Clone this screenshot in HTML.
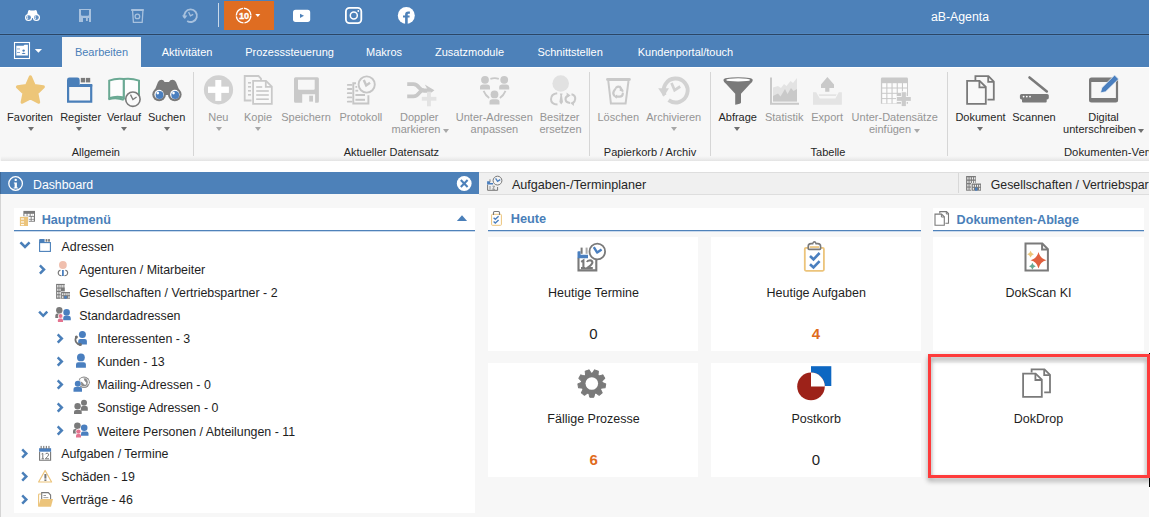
<!DOCTYPE html>
<html><head><meta charset="utf-8"><style>
html,body{margin:0;padding:0;}
body{width:1150px;height:517px;position:relative;overflow:hidden;background:#fff;font-family:"Liberation Sans",sans-serif;}
.t{position:absolute;white-space:nowrap;line-height:20px;}
.r{position:absolute;}
svg.r{overflow:visible}
</style></head><body>
<div class="r" style="left:0px;top:0px;width:1149px;height:33px;background:#4d81b9;"></div>
<div class="r" style="left:0px;top:34px;width:1149px;height:33px;background:#4d81b9;"></div>
<div class="r" style="left:0px;top:33px;width:1149px;height:1px;background:#5287bf;"></div>
<div class="r" style="left:0px;top:35px;width:1149px;height:1px;background:#5287bf;"></div>
<div class="r" style="left:0px;top:34px;width:1149px;height:1px;background:#2b4666;"></div>
<svg class="r" style="left:0;top:0" width="450" height="67" viewBox="0 0 450 67">
<!-- binoculars -->
<path d="M27 15.5 L28.3 10.6 Q29.5 9.2 30.6 10.6 L34.3 10.6 Q35.4 9.2 36.6 10.6 L38 15.5 Z" fill="#fff"/>
<circle cx="28.6" cy="17.5" r="3.6" fill="#fff"/><circle cx="36.4" cy="17.5" r="3.6" fill="#fff"/>
<rect x="30" y="14" width="5" height="4" fill="#fff"/>
<circle cx="28.6" cy="17.6" r="2.4" fill="#5f8ec2"/><circle cx="36.4" cy="17.6" r="2.4" fill="#5f8ec2"/><path d="M27.6 16.2 Q27 17.6 27.8 19 M35.4 16.2 Q34.8 17.6 35.6 19" stroke="#fff" stroke-width="0.8" fill="none"/>
<!-- floppy -->
<g fill="#a7c1de">
<path d="M79 9 H91 V22 H89 V18 H83 V22 H79 Z M81 10 V14.5 Q81 15.7 82.2 15.7 H87.8 Q89 15.7 89 14.5 V10 Z" fill-rule="evenodd"/>
<rect x="86" y="18" width="1.8" height="3"/>
</g>
<!-- trash -->
<g fill="none" stroke="#a7c1de" stroke-width="1.3">
<path d="M132.6 11 L133.4 22.4 H142.2 L142.9 11"/>
<circle cx="137.4" cy="16.4" r="2.3"/>
</g>
<rect x="131" y="9" width="13" height="2" rx="0.8" fill="#a7c1de"/>
<!-- history -->
<g fill="none" stroke="#a7c1de" stroke-width="1.9">
<path d="M184.6 17.6 A6.3 6.3 0 1 1 187.2 21"/>
<path d="M188.6 12 L190.4 15.8 L193.2 14.4" stroke-width="1.3"/>
</g>
<path d="M182 15.5 L187.4 15.5 L184.8 19 Z" fill="#a7c1de"/>
<!-- separator -->
<rect x="218" y="3" width="1" height="24" fill="#c9d9ea"/>
<!-- orange box -->
<rect x="224" y="1" width="50" height="29" fill="#df6d22"/>
<circle cx="243.6" cy="15.6" r="7.3" fill="none" stroke="#fff" stroke-width="1.4" stroke-dasharray="10.5 1"/>
<text x="243.9" y="19" font-family="Liberation Sans" font-weight="bold" font-size="9.2" fill="#fff" stroke="#fff" stroke-width="0.35" text-anchor="middle" letter-spacing="-0.3">10</text>
<path d="M255.3 14 H260.3 L257.8 17 Z" fill="#fff"/>
<!-- youtube -->
<rect x="293" y="9.8" width="17.2" height="12.1" rx="2.6" fill="#fff"/>
<path d="M300 13.7 L304 15.8 L300 17.9 Z" fill="#4d81b9"/>
<!-- instagram -->
<rect x="345.9" y="7.9" width="15.4" height="15.2" rx="3.6" fill="none" stroke="#fff" stroke-width="1.8"/>
<circle cx="353.8" cy="15.4" r="3.5" fill="none" stroke="#fff" stroke-width="1.5"/>
<circle cx="358.3" cy="11" r="0.9" fill="#fff"/>
<!-- facebook -->
<circle cx="406.3" cy="15.4" r="8.5" fill="#fff"/>
<path d="M405.1 24 V14.5 Q405.1 11.6 408.2 11.6 H409.9 V13.7 H408.6 Q407.7 13.7 407.7 14.6 V24 Z M403 15.6 H409.6 V17.5 H403 Z" fill="#4d81b9"/>
<!-- tab icon -->
<rect x="14.5" y="42.5" width="15" height="16" fill="none" stroke="#fff" stroke-width="1.1"/>
<path d="M16.3 45.8 H23.5 L24.6 44.8 H27.9 V55.6 H16.3 Z" fill="#fff"/>
<rect x="17" y="48.5" width="3" height="0.9" fill="#7fa4cf"/><rect x="17" y="52" width="3" height="0.9" fill="#7fa4cf"/>
<circle cx="23.6" cy="50.6" r="1.2" fill="#4d81b9"/><path d="M21.6 54 Q23.6 51.5 25.6 54 Z" fill="#4d81b9"/>
<path d="M34.8 48.9 H42 L38.4 52.8 Z" fill="#fff"/>
</svg>

<div class="t" style="left:760.00px;width:400px;text-align:center;top:6.64px;font-size:12.3px;color:#ffffff;font-weight:normal;">aB-Agenta</div>
<div class="r" style="left:62px;top:37px;width:79px;height:30px;background:#f7f7f7;"></div>
<div class="t" style="left:-98.50px;width:400px;text-align:center;top:42.19px;font-size:11px;color:#4a7fb9;font-weight:normal;">Bearbeiten</div>
<div class="t" style="left:-13.00px;width:400px;text-align:center;top:42.19px;font-size:11px;color:#fff;font-weight:normal;">Aktivitäten</div>
<div class="t" style="left:89.60px;width:400px;text-align:center;top:42.19px;font-size:11px;color:#fff;font-weight:normal;">Prozesssteuerung</div>
<div class="t" style="left:184.00px;width:400px;text-align:center;top:42.19px;font-size:11px;color:#fff;font-weight:normal;">Makros</div>
<div class="t" style="left:269.50px;width:400px;text-align:center;top:42.19px;font-size:11px;color:#fff;font-weight:normal;">Zusatzmodule</div>
<div class="t" style="left:370.10px;width:400px;text-align:center;top:42.19px;font-size:11px;color:#fff;font-weight:normal;">Schnittstellen</div>
<div class="t" style="left:485.50px;width:400px;text-align:center;top:42.19px;font-size:11px;color:#fff;font-weight:normal;">Kundenportal/touch</div>
<div class="r" style="left:0px;top:67px;width:1149px;height:94px;background:#f7f7f7;"></div>
<div class="r" style="left:1px;top:67px;width:1148px;height:94px;background:linear-gradient(#f7f7f7 0,#f7f7f7 89px,#ededed 92px,#e3e3e3 94px);"></div>
<div class="r" style="left:0px;top:67px;width:1149px;height:1px;background:#ffffff;"></div>
<div class="r" style="left:62px;top:67px;width:79px;height:1px;background:#f7f7f7;"></div>
<div class="r" style="left:193px;top:72px;width:1px;height:84px;background:#d6d6d6;"></div>
<div class="r" style="left:589px;top:72px;width:1px;height:84px;background:#d6d6d6;"></div>
<div class="r" style="left:710px;top:72px;width:1px;height:84px;background:#d6d6d6;"></div>
<div class="r" style="left:947px;top:72px;width:1px;height:84px;background:#d6d6d6;"></div>
<svg class="r" style="left:0;top:67px" width="1150" height="50" viewBox="0 67 1150 50">
<!-- star -->
<path d="M30.4 77 L34.2 85.6 L43.3 86.8 L36.8 93.2 L38.6 102.2 L30.4 97.8 L22.2 102.2 L24 93.2 L17.5 86.8 L26.6 85.6 Z" fill="#edc679" stroke="#edc679" stroke-width="3.2" stroke-linejoin="round"/>
<!-- register -->
<path d="M68.1 86 H91.2 V101.7 H68.1 Z" fill="none" stroke="#4a7fb9" stroke-width="2.2"/>
<path d="M67 86.5 V80 Q67 77.6 69.4 77.6 H77.4 Q79.7 77.6 79.7 80 V86.5 Z" fill="#4a7fb9"/>
<path d="M79.7 84 H92.3 V86.5 H79.7 Z" fill="#4a7fb9"/>
<rect x="80.8" y="77.9" width="4.2" height="4.5" fill="#7b7b7b"/><rect x="85.8" y="77.9" width="4.4" height="4.5" fill="#7b7b7b"/>
<!-- verlauf book -->
<path d="M123.8 97.5 Q116 95.6 109.2 98.2 V80.6 Q116 78 123.8 79 Q131.5 78 139 80.6 V98.2" fill="#fdfdfd" stroke="#6aa993" stroke-width="2"/>
<path d="M123.8 79 V99.5" stroke="#6aa993" stroke-width="2.2"/>
<path d="M108.5 99.2 Q116 96.8 123.8 99.8" fill="none" stroke="#6aa993" stroke-width="2.2"/>
<circle cx="132.9" cy="99.2" r="7.2" fill="#fafafa" stroke="#7a7a7a" stroke-width="1.6"/>
<path d="M130.5 94.6 L132.9 99.6 L136.6 97" fill="none" stroke="#7a7a7a" stroke-width="1.3"/>
<!-- suchen binoculars -->
<path d="M153 94.6 L158 82 Q159.4 79.7 161.5 79.7 Q163.6 79.7 164.6 82 H169 Q170 79.7 172.4 79.7 Q174.6 79.7 176 82 L181 94.6 Z" fill="#7a7a7a"/>
<rect x="163" y="86" width="8" height="9" fill="#7a7a7a"/>
<circle cx="159.1" cy="94.5" r="6.8" fill="#7a7a7a"/><circle cx="174.8" cy="94.5" r="6.8" fill="#7a7a7a"/>
<circle cx="159.1" cy="94.5" r="4.7" fill="#fff"/><circle cx="174.8" cy="94.5" r="4.7" fill="#fff"/>
<circle cx="159.5" cy="95" r="3.9" fill="#4a7fbf"/><circle cx="175.2" cy="95" r="3.9" fill="#4a7fbf"/>
<circle cx="157.8" cy="93.1" r="1.3" fill="#fff"/><circle cx="173.5" cy="93.1" r="1.3" fill="#fff"/>
<!-- neu -->
<circle cx="218.5" cy="89.8" r="14.6" fill="#d1d1d1"/>
<rect x="208" y="86.6" width="20.9" height="6.3" fill="#fff"/><rect x="215.3" y="80" width="6" height="20.9" fill="#fff"/>
<!-- kopie -->
<path d="M251.5 100.5 H244.7 V76 H258.5 L261 78.5 V80.5" fill="none" stroke="#c9c9c9" stroke-width="1.8"/>
<path d="M253.1 80.9 H266 L271.8 86.7 V103.8 H253.1 Z" fill="#fafafa" stroke="#c9c9c9" stroke-width="1.8"/>
<path d="M265.8 81 V86.8 H271.7" fill="none" stroke="#c9c9c9" stroke-width="1.8"/>
<g fill="#c9c9c9"><rect x="248" y="82" width="3" height="1.6"/><rect x="248" y="86" width="3" height="1.6"/><rect x="248" y="90" width="3" height="1.6"/><rect x="248" y="94" width="3" height="1.6"/>
<rect x="256.2" y="86.2" width="6" height="1.6"/><rect x="256.2" y="90.2" width="12.6" height="1.6"/><rect x="256.2" y="94.2" width="12.6" height="1.6"/><rect x="256.2" y="98.4" width="12.6" height="1.6"/></g>
<!-- speichern -->
<path d="M295.5 77.2 H317.4 Q318.9 77.2 318.9 78.7 V101.2 Q318.9 102.7 317.4 102.7 H295.5 Q294 102.7 294 101.2 V78.7 Q294 77.2 295.5 77.2 Z M298 79.7 V88.8 Q298 89.8 299 89.8 H313.7 Q314.7 89.8 314.7 88.8 V79.7 Z M302.2 94.3 V102.7 H315.1 V94.3 Z" fill="#c9c9c9" fill-rule="evenodd"/>
<rect x="309.2" y="95.7" width="3.8" height="5.9" fill="#c9c9c9"/>
<!-- protokoll -->
<path d="M356 83.2 H353.3 V103.5 H368.4 V95.3" fill="none" stroke="#c6c6c6" stroke-width="1.9"/>
<g fill="#c6c6c6"><rect x="346.9" y="84" width="5.5" height="1.8" rx="0.9"/><rect x="346.9" y="88.1" width="5.5" height="1.8" rx="0.9"/><rect x="346.9" y="92.3" width="5.5" height="1.8" rx="0.9"/><rect x="346.9" y="96.5" width="5.5" height="1.8" rx="0.9"/><rect x="346.9" y="100.8" width="5.5" height="1.8" rx="0.9"/>
<rect x="355.4" y="86" width="1.8" height="1.8"/><rect x="355.4" y="89.8" width="2.8" height="1.8"/><rect x="355.4" y="94" width="9.6" height="2"/><rect x="355.4" y="98.8" width="9.6" height="2"/></g>
<circle cx="366.7" cy="84.5" r="8.1" fill="#f7f7f7" stroke="#c6c6c6" stroke-width="1.9"/>
<path d="M363.8 80 L366.2 85.5 L370 82.8" fill="none" stroke="#c6c6c6" stroke-width="2.4"/>
<!-- doppler -->
<path d="M407.2 84.2 H413.5 Q416.5 84.2 419 87.5 Q421.5 90.5 424 90.5 H430 M407.2 96.4 H413.5 Q416.5 96.4 419 93.1 Q421.5 90.1 424 90.1" fill="none" stroke="#c8c8c8" stroke-width="3.8"/>
<path d="M424.8 84.6 L434.4 90.2 L431.5 92.4 L423 92.4 L427.6 89.5 Z" fill="#c8c8c8"/>
<rect x="421.8" y="96.9" width="14.6" height="3.8" fill="#e3e3e3"/><rect x="427" y="91.7" width="3.9" height="14.6" fill="#e3e3e3"/>
<!-- unter-adressen -->
<g fill="#c9c9c9">
<circle cx="485" cy="79.8" r="3.9"/><path d="M480 89.5 V87.2 Q480 84.4 483 84.4 H487 Q490 84.4 490 87.2 V89.5 Z"/>
<circle cx="504.2" cy="79.8" r="3.9"/><path d="M499.2 89.5 V87.2 Q499.2 84.4 502.2 84.4 H506.2 Q509.2 84.4 509.2 87.2 V89.5 Z"/>
<circle cx="494.5" cy="94.4" r="3.9"/><path d="M489.5 104.6 V102 Q489.5 99.2 492.5 99.2 H496.5 Q499.5 99.2 499.5 102 V104.6 Z"/>
</g>
<g fill="none" stroke="#c9c9c9" stroke-width="1.8"><path d="M490.4 78.9 Q494.6 77.4 498.8 78.9"/><path d="M483.6 90.8 Q485.5 95.5 489.2 98"/><path d="M505.5 90.8 Q503.6 95.5 499.9 98"/></g>
<!-- besitzer -->
<circle cx="560.7" cy="83.5" r="8.3" fill="#e1e1e1"/>
<path d="M557.2 93.2 Q551.2 93.8 551 99.2 Q551 104.2 557.5 104.5" fill="none" stroke="#c9c9c9" stroke-width="2"/>
<path d="M559.8 93.5 H562.6 L562 95.5 L563 102 L561.2 104.5 L559.4 102 L560.4 95.5 Z" fill="#c9c9c9"/>
<path d="M568.5 95.5 Q565.5 96.5 565.5 99.2 Q565.8 102.8 570 103 M571.5 94.2 Q575.5 95 575.2 99 Q575 102 572.5 103.6" fill="none" stroke="#c9c9c9" stroke-width="2.1"/>
<path d="M566.5 92.6 L570.6 95.6 L567 97.8 Z M573.8 106 L570.2 103 L574 101 Z" fill="#c9c9c9"/>
<!-- loeschen trash -->
<rect x="606.1" y="77.9" width="24.7" height="3.1" rx="1.4" fill="#c9c9c9"/>
<path d="M608.3 81 L610.9 103.5 H625.6 L628.5 81" fill="none" stroke="#c9c9c9" stroke-width="2"/>
<g fill="none" stroke="#c9c9c9" stroke-width="2.2" stroke-linecap="round"><path d="M616.2 87.6 Q618.3 85.8 620.2 87.4 L622.4 90.6"/><path d="M622.8 93.6 Q622.6 96.4 619.8 96.6 H616.4"/><path d="M614.1 95.4 Q612.6 93.4 613.9 91 L615.2 89.2"/></g>
<path d="M620.4 85.2 L623.6 91.8 L619.6 90.8 Z M617.2 94.4 L616.6 98.8 L613.8 96.4 Z" fill="#c9c9c9"/>
<!-- archivieren history -->
<path d="M664.6 95.2 A12 12 0 1 1 668.6 100.2" fill="none" stroke="#d2d2d2" stroke-width="3.9"/>
<path d="M658.2 88.2 L669 88.2 L663.8 96.8 Z" fill="#d2d2d2"/>
<path d="M671.5 83 L674.6 90.2 L680.2 86.5" fill="none" stroke="#d2d2d2" stroke-width="2.7"/>
<!-- abfrage funnel -->
<path d="M723.4 80 Q723.4 77.2 738 77.2 Q752.8 77.2 752.8 80 Q752.8 82 750 84 L741 93.8 V102.6 Q741 104 735.2 104.8 V93.8 L726.2 84 Q723.4 82 723.4 80 Z" fill="#7a7a7a"/>
<ellipse cx="738.1" cy="79.9" rx="12" ry="1.7" fill="#fff"/>
<!-- statistik -->
<path d="M773 101.6 V87.5 L778 86 L781 88 L784 84 L786.5 86 L790.5 81 L793 83 L797 78 V101.6 Z" fill="#e3e3e3"/>
<path d="M773 101.6 V96 L778 93.5 L780.5 96.5 L785 89 L787.5 94 L791 88 L793.5 91 L797 89 V101.6 Z" fill="#c9c9c9"/>
<path d="M771 77.6 V103.7 H799" fill="none" stroke="#c9c9c9" stroke-width="2"/>
<!-- export -->
<path d="M813 92.2 H816.2 L819.8 98.6 H835.4 L838.8 92.2 H841.9 V104.7 H813 Z" fill="#e4e4e4"/>
<path d="M818.6 94.3 H836.6 L835.8 96 H819.4 Z" fill="#e4e4e4"/>
<path d="M827.4 76.9 L834 84.5 V88 H829.4 V91.8 H825.2 V88 H821 V84.5 Z" fill="#c9c9c9"/>
<!-- unter-datensaetze table -->
<path d="M880.9 79 Q880.9 77.6 882.3 77.6 H906.6 Q908 77.6 908 79 V103.7 H880.9 Z" fill="#c9c9c9"/>
<g fill="#fcfcfc">
<rect x="882.2" y="83.2" width="4.1" height="4.3"/><rect x="887.4" y="83.2" width="4.1" height="4.3"/><rect x="892.6" y="83.2" width="4.1" height="4.3"/><rect x="897.8" y="83.2" width="4.1" height="4.3"/><rect x="903" y="83.2" width="4" height="4.3"/>
<rect x="882.2" y="88.5" width="4.1" height="4.3"/><rect x="887.4" y="88.5" width="4.1" height="4.3"/><rect x="892.6" y="88.5" width="4.1" height="4.3"/><rect x="897.8" y="88.5" width="4.1" height="4.3"/><rect x="903" y="88.5" width="4" height="4.3"/>
<rect x="882.2" y="93.8" width="4.1" height="4.3"/><rect x="887.4" y="93.8" width="4.1" height="4.3"/><rect x="892.6" y="93.8" width="4.1" height="4.3"/>
<rect x="882.2" y="99.1" width="4.1" height="4.3"/><rect x="887.4" y="99.1" width="4.1" height="4.3"/><rect x="892.6" y="99.1" width="4.1" height="4.3"/>
</g>
<path d="M896 96 H901 V91.2 H906.7 V96 H911.8 V101.9 H906.7 V107 H901 V101.9 H896 Z" fill="#f7f7f7"/>
<rect x="896.9" y="97" width="13.9" height="3.9" fill="#cbcbcb"/><rect x="901.7" y="92.2" width="4.2" height="13.9" fill="#cbcbcb"/>
<!-- dokument -->
<path d="M975.4 80 V76.2 H988.5 L993.8 81.5 V99.6 H987.5" fill="none" stroke="#7a7a7a" stroke-width="1.8"/>
<path d="M988.2 76.3 V81.8 H993.7" fill="none" stroke="#7a7a7a" stroke-width="1.8"/>
<path d="M967.1 80.9 H979.6 L985.8 87 V103.8 H967.1 Z" fill="#f9f9f9" stroke="#7a7a7a" stroke-width="1.8"/>
<path d="M979.4 81 V87.3 H985.7" fill="none" stroke="#7a7a7a" stroke-width="1.8"/>
<!-- scannen -->
<path d="M1029.5 77.5 L1046.8 91.4" stroke="#7a7a7a" stroke-width="2.6" stroke-linecap="round"/>
<path d="M1021.6 93.9 H1047.1 Q1048.8 93.9 1048.8 95.6 V97.8 Q1048.8 99.5 1047.1 99.5 H1046.7 V101.6 Q1046.7 102.6 1045.7 102.6 H1023 Q1022 102.6 1022 101.6 V99.5 H1021.6 Q1019.9 99.5 1019.9 97.8 V95.6 Q1019.9 93.9 1021.6 93.9 Z" fill="#7a7a7a"/>
<circle cx="1023.6" cy="96.6" r="0.9" fill="#fff"/><circle cx="1026.8" cy="96.6" r="0.9" fill="#fff"/><circle cx="1030" cy="96.6" r="0.9" fill="#fff"/>
<!-- digital sign -->
<path d="M1091.5 77.6 H1115.6 Q1118.1 77.6 1118.1 80.1 V100.1 Q1118.1 102.6 1115.6 102.6 H1091.5 Q1089 102.6 1089 100.1 V80.1 Q1089 77.6 1091.5 77.6 Z M1091.3 82.1 V98.1 H1115.9 V82.1 Z" fill="#7a7a7a" fill-rule="evenodd"/>
<path d="M1110.5 77.6 L1113 75" stroke="#f7f7f7" stroke-width="0"/>
<path d="M1100.4 92.9 L1101.8 87.8 L1114.6 75.1 L1118.6 79.1 L1105.6 91.8 Z" fill="#4a7fbf" stroke="#f7f7f7" stroke-width="0.8"/>
</svg>

<div class="t" style="left:-170.00px;width:400px;text-align:center;top:106.79px;font-size:11px;color:#262626;font-weight:normal;">Favoriten</div>
<div class="r" style="left:27.8px;top:127px;width:0;height:0;border-left:3.5px solid transparent;border-right:3.5px solid transparent;border-top:4px solid #6f6f6f"></div>
<div class="t" style="left:-119.40px;width:400px;text-align:center;top:106.79px;font-size:11px;color:#262626;font-weight:normal;">Register</div>
<div class="r" style="left:76.3px;top:127px;width:0;height:0;border-left:3.5px solid transparent;border-right:3.5px solid transparent;border-top:4px solid #6f6f6f"></div>
<div class="t" style="left:-76.00px;width:400px;text-align:center;top:106.79px;font-size:11px;color:#262626;font-weight:normal;">Verlauf</div>
<div class="r" style="left:120.5px;top:127px;width:0;height:0;border-left:3.5px solid transparent;border-right:3.5px solid transparent;border-top:4px solid #6f6f6f"></div>
<div class="t" style="left:-33.40px;width:400px;text-align:center;top:106.79px;font-size:11px;color:#262626;font-weight:normal;">Suchen</div>
<div class="r" style="left:163.9px;top:127px;width:0;height:0;border-left:3.5px solid transparent;border-right:3.5px solid transparent;border-top:4px solid #6f6f6f"></div>
<div class="t" style="left:18.30px;width:400px;text-align:center;top:106.79px;font-size:11px;color:#959595;font-weight:normal;">Neu</div>
<div class="r" style="left:215.5px;top:127px;width:0;height:0;border-left:3.5px solid transparent;border-right:3.5px solid transparent;border-top:4px solid #a8a8a8"></div>
<div class="t" style="left:58.00px;width:400px;text-align:center;top:106.79px;font-size:11px;color:#959595;font-weight:normal;">Kopie</div>
<div class="r" style="left:254.8px;top:127px;width:0;height:0;border-left:3.5px solid transparent;border-right:3.5px solid transparent;border-top:4px solid #a8a8a8"></div>
<div class="t" style="left:106.00px;width:400px;text-align:center;top:106.79px;font-size:11px;color:#959595;font-weight:normal;">Speichern</div>
<div class="t" style="left:160.90px;width:400px;text-align:center;top:106.79px;font-size:11px;color:#959595;font-weight:normal;">Protokoll</div>
<div class="t" style="left:418.25px;width:400px;text-align:center;top:106.79px;font-size:11px;color:#959595;font-weight:normal;">Löschen</div>
<div class="t" style="left:473.70px;width:400px;text-align:center;top:106.79px;font-size:11px;color:#959595;font-weight:normal;">Archivieren</div>
<div class="r" style="left:670.8px;top:127px;width:0;height:0;border-left:3.5px solid transparent;border-right:3.5px solid transparent;border-top:4px solid #a8a8a8"></div>
<div class="t" style="left:537.70px;width:400px;text-align:center;top:106.79px;font-size:11px;color:#262626;font-weight:normal;">Abfrage</div>
<div class="r" style="left:734.0px;top:127px;width:0;height:0;border-left:3.5px solid transparent;border-right:3.5px solid transparent;border-top:4px solid #6f6f6f"></div>
<div class="t" style="left:584.20px;width:400px;text-align:center;top:106.79px;font-size:11px;color:#959595;font-weight:normal;">Statistik</div>
<div class="t" style="left:627.10px;width:400px;text-align:center;top:106.79px;font-size:11px;color:#959595;font-weight:normal;">Export</div>
<div class="t" style="left:780.50px;width:400px;text-align:center;top:106.79px;font-size:11px;color:#262626;font-weight:normal;">Dokument</div>
<div class="r" style="left:976.5px;top:127px;width:0;height:0;border-left:3.5px solid transparent;border-right:3.5px solid transparent;border-top:4px solid #6f6f6f"></div>
<div class="t" style="left:834.00px;width:400px;text-align:center;top:106.79px;font-size:11px;color:#262626;font-weight:normal;">Scannen</div>
<div class="t" style="left:903.50px;width:400px;text-align:center;top:106.79px;font-size:11px;color:#262626;font-weight:normal;">Digital</div>
<div class="t" style="left:219.25px;width:400px;text-align:center;top:106.79px;font-size:11px;color:#959595;font-weight:normal;">Doppler</div>
<div class="t" style="left:294.30px;width:400px;text-align:center;top:106.79px;font-size:11px;color:#959595;font-weight:normal;">Unter-Adressen</div>
<div class="t" style="left:359.60px;width:400px;text-align:center;top:106.79px;font-size:11px;color:#959595;font-weight:normal;">Besitzer</div>
<div class="t" style="left:694.70px;width:400px;text-align:center;top:106.79px;font-size:11px;color:#959595;font-weight:normal;">Unter-Datensätze</div>
<div class="t" style="left:216.00px;width:400px;text-align:center;top:119.49px;font-size:11px;color:#959595;font-weight:normal;">markieren</div>
<div class="r" style="left:442.5px;top:129px;width:0;height:0;border-left:3.5px solid transparent;border-right:3.5px solid transparent;border-top:4px solid #a8a8a8"></div>
<div class="t" style="left:294.40px;width:400px;text-align:center;top:119.49px;font-size:11px;color:#959595;font-weight:normal;">anpassen</div>
<div class="t" style="left:360.50px;width:400px;text-align:center;top:119.49px;font-size:11px;color:#959595;font-weight:normal;">ersetzen</div>
<div class="t" style="left:690.00px;width:400px;text-align:center;top:119.49px;font-size:11px;color:#959595;font-weight:normal;">einfügen</div>
<div class="r" style="left:914.0px;top:129px;width:0;height:0;border-left:3.5px solid transparent;border-right:3.5px solid transparent;border-top:4px solid #a8a8a8"></div>
<div class="t" style="left:899.50px;width:400px;text-align:center;top:119.49px;font-size:11px;color:#262626;font-weight:normal;">unterschreiben</div>
<div class="r" style="left:1138.1px;top:129px;width:0;height:0;border-left:3.5px solid transparent;border-right:3.5px solid transparent;border-top:4px solid #6f6f6f"></div>
<div class="t" style="left:-104.20px;width:400px;text-align:center;top:141.89px;font-size:11px;color:#262626;font-weight:normal;">Allgemein</div>
<div class="t" style="left:191.40px;width:400px;text-align:center;top:141.89px;font-size:11px;color:#262626;font-weight:normal;">Aktueller Datensatz</div>
<div class="t" style="left:450.00px;width:400px;text-align:center;top:141.89px;font-size:11px;color:#262626;font-weight:normal;">Papierkorb / Archiv</div>
<div class="t" style="left:628.00px;width:400px;text-align:center;top:141.89px;font-size:11px;color:#262626;font-weight:normal;">Tabelle</div>
<div class="r" style="left:0;top:0;width:1149px;height:517px;overflow:hidden">
<div class="t" style="left:1064.00px;top:141.80px;font-size:11.25px;color:#262626;font-weight:normal;">Dokumenten-Verwaltung</div>
</div>
<div class="r" style="left:0px;top:194px;width:1149px;height:323px;background:#f7f7f7;"></div>
<div class="r" style="left:0px;top:194px;width:1px;height:323px;background:#d4d4d4;"></div>
<div class="r" style="left:14px;top:208px;width:461px;height:305px;background:#ffffff;"></div>
<div class="r" style="left:14px;top:230px;width:461px;height:1px;background:#4f82ba;"></div>
<div class="r" style="left:14px;top:231px;width:461px;height:1px;background:#c9d9ec;"></div>
<svg class="r" style="left:456px;top:214px" width="12" height="8" viewBox="456 214 12 8"><path d="M456.9 220.9 L462 215.2 L467.1 220.9 Z" fill="#4a7fb9"/></svg>
<div class="r" style="left:488px;top:208px;width:433px;height:22px;background:#ffffff;"></div>
<div class="r" style="left:488px;top:230px;width:433px;height:1px;background:#4f82ba;"></div>
<div class="r" style="left:488px;top:231px;width:433px;height:1px;background:#c9d9ec;"></div>
<div class="r" style="left:933px;top:208px;width:211px;height:22px;background:#ffffff;"></div>
<div class="r" style="left:933px;top:230px;width:211px;height:1px;background:#4f82ba;"></div>
<div class="r" style="left:933px;top:231px;width:211px;height:1px;background:#c9d9ec;"></div>
<div class="r" style="left:0px;top:172px;width:479px;height:22px;background:#4d81b9;"></div>
<div class="r" style="left:0px;top:172px;width:1px;height:22px;background:#3e6a9a;"></div>
<div class="r" style="left:479px;top:172px;width:670px;height:23px;background:#f0f0f0;box-sizing:border-box;border-top:1px solid #dedede;border-bottom:1px solid #dedede"></div>
<div class="r" style="left:958px;top:173px;width:1px;height:20px;background:#d8d8d8;"></div>
<div class="t" style="left:33.00px;top:174.54px;font-size:12.3px;color:#ffffff;font-weight:normal;">Dashboard</div>
<svg class="r" style="left:0;top:172px" width="1150" height="60" viewBox="0 172 1150 60">
<!-- info -->
<circle cx="15.6" cy="183.5" r="6.8" fill="none" stroke="#fff" stroke-width="1.3"/>
<circle cx="15.7" cy="179.9" r="1.2" fill="#fff"/>
<path d="M13.9 182.4 H16.9 V187.6 H17.9 V188.6 H13.6 V187.6 H14.6 V183.4 H13.9 Z" fill="#fff"/>
<!-- close -->
<circle cx="464.2" cy="183.5" r="7.4" fill="#fff"/>
<path d="M460.8 180.1 L467.6 186.9 M467.6 180.1 L460.8 186.9" stroke="#4d81b9" stroke-width="2.1"/>
<!-- aufgaben tab icon -->
<path d="M487.6 184.6 V190.3 H497.6 V187" fill="none" stroke="#777" stroke-width="1"/>
<path d="M487.1 181.2 H490 V183 H493 V184.6 H487.1 Z" fill="#4a7fbf"/>
<rect x="489.5" y="179.3" width="1" height="3" fill="#888"/>
<path d="M490 186 V189.5 M492.5 186.2 H494.5 L492.7 189.3 H495" fill="none" stroke="#888" stroke-width="0.9"/>
<circle cx="497.5" cy="180.6" r="4.4" fill="#f5f5f5" stroke="#777" stroke-width="1"/>
<path d="M495.6 178.3 L497.6 181.4 L500.2 179.6" fill="none" stroke="#4a7fbf" stroke-width="1.3"/>
<!-- building tab icon -->
<rect x="966.1" y="176" width="9.8" height="14.7" fill="#7a7a7a"/>
<g fill="#f2f2f2"><rect x="967.3" y="177.3" width="1.2" height="2.2"/><rect x="969.6" y="177.3" width="1.2" height="2.2"/><rect x="971.9" y="177.3" width="1.2" height="2.2"/><rect x="974.1" y="177.3" width="1.2" height="2.2"/>
<rect x="967.3" y="180.8" width="1.2" height="2.2"/><rect x="969.6" y="180.8" width="1.2" height="2.2"/><rect x="971.9" y="180.8" width="1.2" height="2.2"/><rect x="974.1" y="180.8" width="1.2" height="2.2"/>
<rect x="967.3" y="184.3" width="1.2" height="2.2"/><rect x="969.6" y="184.3" width="1.2" height="2.2"/><rect x="967.3" y="187.6" width="1.2" height="2.2"/><rect x="969.6" y="187.6" width="1.2" height="2.2"/></g>
<rect x="971" y="183" width="10.6" height="8.2" fill="#f2f2f2"/>
<rect x="971.6" y="183.5" width="9.4" height="7.2" fill="#7a7a7a"/>
<g fill="#f2f2f2"><rect x="972.8" y="184.8" width="1.1" height="2"/><rect x="974.9" y="184.8" width="1.1" height="2"/><rect x="977" y="184.8" width="1.1" height="2"/><rect x="979.1" y="184.8" width="1.1" height="2"/>
<rect x="972.8" y="187.8" width="1.1" height="2"/><rect x="979.1" y="187.8" width="1.1" height="2"/></g>
<rect x="975" y="187.6" width="2.4" height="3.1" fill="#4a7fbf"/>
<!-- hauptmenu icon -->
<rect x="23.4" y="210.9" width="11.6" height="10.8" fill="#7a7a7a"/>
<g fill="#fff"><rect x="24.4" y="213.8" width="2.2" height="2.1"/><rect x="27.5" y="213.8" width="2.2" height="2.1"/><rect x="30.6" y="213.8" width="2.2" height="2.1"/><rect x="33" y="213.8" width="1" height="2.1"/>
<rect x="28.5" y="216.8" width="2.2" height="2.1"/><rect x="31.6" y="216.8" width="2.2" height="2.1"/><rect x="28.5" y="219.6" width="2.2" height="1.3"/><rect x="31.6" y="219.6" width="2.2" height="1.3"/></g>
<rect x="19.2" y="216.2" width="9.6" height="10.6" fill="#fff"/>
<rect x="19.9" y="216.9" width="8.1" height="9.1" fill="#ecc47b"/>
<g fill="#fff"><rect x="21" y="218.4" width="3" height="1.1"/><rect x="21" y="221.4" width="3" height="1.1"/><rect x="21" y="224.1" width="3" height="1.1"/></g>
<!-- heute clipboard -->
<rect x="491.6" y="214.3" width="9.8" height="11" rx="0.8" fill="#fff" stroke="#ecc47b" stroke-width="1"/>
<path d="M493.5 215 V212.6 Q493.5 211.5 494.6 211.5 H498.4 Q499.5 211.5 499.5 212.6 V215" fill="none" stroke="#7a7a7a" stroke-width="1.1"/>
<path d="M493.6 217.8 L495.3 219.3 L498.6 216.3 M493.6 221.6 L495.3 223.1 L498.6 220.1" fill="none" stroke="#4a7fbf" stroke-width="1.4"/>
<!-- dok ablage icon -->
<path d="M939.8 213.4 V211.6 H946.5 L948.5 213.6 V223.2 H945.4" fill="none" stroke="#7a7a7a" stroke-width="1.1"/>
<path d="M946.3 211.7 V214 H948.5" fill="none" stroke="#7a7a7a" stroke-width="1"/>
<path d="M935 214.1 H941.6 L944.3 216.8 V225.3 H935 Z" fill="#fff" stroke="#7a7a7a" stroke-width="1.1"/>
<path d="M941.4 214.2 V217 H944.2" fill="none" stroke="#7a7a7a" stroke-width="1"/>
</svg>

<div class="r" style="left:0;top:0;width:1149px;height:517px;overflow:hidden">
<div class="t" style="left:511.90px;top:174.93px;font-size:12.6px;color:#262626;font-weight:normal;">Aufgaben-/Terminplaner</div>
<div class="t" style="left:990.80px;top:175.04px;font-size:12.3px;color:#262626;font-weight:normal;">Gesellschaften / Vertriebspartner</div>
</div>
<div class="t" style="left:41.70px;top:209.73px;font-size:12.6px;color:#4a7fb9;font-weight:bold;">Hauptmenü</div>
<div class="t" style="left:510.70px;top:209.36px;font-size:12.8px;color:#4a7fb9;font-weight:bold;">Heute</div>
<div class="t" style="left:956.60px;top:209.73px;font-size:12.6px;color:#4a7fb9;font-weight:bold;">Dokumenten-Ablage</div>
<div class="t" style="left:61.60px;top:236.70px;font-size:12.4px;color:#1e1e1e;font-weight:normal;">Adressen</div>
<div class="t" style="left:79.20px;top:259.70px;font-size:12.4px;color:#1e1e1e;font-weight:normal;">Agenturen / Mitarbeiter</div>
<div class="t" style="left:79.20px;top:282.70px;font-size:12.4px;color:#1e1e1e;font-weight:normal;">Gesellschaften / Vertriebspartner - 2</div>
<div class="t" style="left:79.20px;top:305.70px;font-size:12.4px;color:#1e1e1e;font-weight:normal;">Standardadressen</div>
<div class="t" style="left:97.20px;top:328.70px;font-size:12.4px;color:#1e1e1e;font-weight:normal;">Interessenten - 3</div>
<div class="t" style="left:97.20px;top:351.70px;font-size:12.4px;color:#1e1e1e;font-weight:normal;">Kunden - 13</div>
<div class="t" style="left:97.20px;top:374.70px;font-size:12.4px;color:#1e1e1e;font-weight:normal;">Mailing-Adressen - 0</div>
<div class="t" style="left:97.20px;top:397.70px;font-size:12.4px;color:#1e1e1e;font-weight:normal;">Sonstige Adressen - 0</div>
<div class="t" style="left:97.20px;top:421.50px;font-size:12.4px;color:#1e1e1e;font-weight:normal;">Weitere Personen / Abteilungen - 11</div>
<div class="t" style="left:61.20px;top:443.70px;font-size:12.4px;color:#1e1e1e;font-weight:normal;">Aufgaben / Termine</div>
<div class="t" style="left:61.20px;top:466.70px;font-size:12.4px;color:#1e1e1e;font-weight:normal;">Schäden - 19</div>
<div class="t" style="left:61.20px;top:489.70px;font-size:12.4px;color:#1e1e1e;font-weight:normal;">Verträge - 46</div>
<svg class="r" style="left:0;top:230px" width="480" height="287" viewBox="0 230 480 287">
<g fill="none" stroke="#4a7fb9" stroke-width="2.5" stroke-linecap="square">
<!-- expand chevrons (down) -->
<path d="M21.3 243.2 L25 246.9 L28.7 243.2"/>
<path d="M40.0 312.5 L43.2 315.8 L46.4 312.5"/>
<!-- right chevrons -->
<path d="M40.8 266.3 L44 269.5 L40.8 272.7"/>
<path d="M58.6 335.3 L61.8 338.5 L58.6 341.7"/><path d="M58.6 358.3 L61.8 361.5 L58.6 364.7"/>
<path d="M58.6 381.3 L61.8 384.5 L58.6 387.7"/><path d="M58.6 404.3 L61.8 407.5 L58.6 410.7"/>
<path d="M58.6 427.3 L61.8 430.5 L58.6 433.7"/>
<path d="M23.1 450.3 L26.3 453.5 L23.1 456.7"/><path d="M23.1 473.3 L26.3 476.5 L23.1 479.7"/><path d="M23.1 496.3 L26.3 499.5 L23.1 502.7"/>
</g>
<!-- adressen -->
<rect x="39.6" y="242.6" width="10.8" height="8.8" fill="none" stroke="#4a7fb9" stroke-width="1.1"/>
<path d="M39.1 243 V240.1 Q39.1 239.1 40.1 239.1 H44.6 V243 Z" fill="#4a7fb9"/>
<rect x="45.6" y="239.1" width="1.8" height="2.6" fill="#777"/><rect x="48.1" y="239.1" width="1.8" height="2.6" fill="#777"/>
<!-- agenturen -->
<circle cx="62.9" cy="265" r="3.9" fill="#f0bfae"/>
<path d="M60.5 270.3 Q58.2 270.6 58.2 273 Q58.4 275.6 61.5 275.8 M65.3 270.3 Q67.7 270.6 67.7 273 Q67.5 275.6 64.4 275.8" fill="none" stroke="#777" stroke-width="1.1"/>
<rect x="62" y="270" width="1.8" height="6" fill="#4a7fbf"/>
<!-- gesellschaften -->
<rect x="56.1" y="283.9" width="8.7" height="14.9" fill="#7a7a7a"/>
<g fill="#fff"><rect x="57.3" y="285" width="1.1" height="2.5"/><rect x="59.5" y="285" width="1.1" height="2.5"/><rect x="61.6" y="285" width="1.1" height="2.5"/><rect x="63.6" y="285" width="0.9" height="2.5"/>
<rect x="57.3" y="288.6" width="1.1" height="2.2"/><rect x="59.5" y="288.6" width="1.1" height="2.2"/><rect x="57.3" y="292" width="1.1" height="2.2"/><rect x="59.5" y="292" width="1.1" height="2.2"/><rect x="57.3" y="295.3" width="1.1" height="2.2"/><rect x="59.5" y="295.3" width="1.1" height="2.2"/></g>
<rect x="60.6" y="291.4" width="10" height="8" fill="#fff"/>
<rect x="61.1" y="292" width="8.9" height="6.8" fill="#7a7a7a"/>
<g fill="#fff"><rect x="62.2" y="293.2" width="1.1" height="2"/><rect x="64.3" y="293.2" width="1.1" height="2"/><rect x="66.4" y="293.2" width="1.1" height="2"/><rect x="68.4" y="293.2" width="1.1" height="2"/><rect x="62.2" y="296.2" width="1.1" height="2"/><rect x="68.4" y="296.2" width="1.1" height="2"/></g>
<rect x="64.4" y="296" width="2.3" height="2.8" fill="#4a7fbf"/>
<!-- standardadressen -->
<circle cx="59.3" cy="310.3" r="3.2" fill="#7a7a7a"/><path d="M55.3 318 V315.8 Q55.3 313.5 57.5 313.5 H61 L62.5 315 V318 Z" fill="#7a7a7a"/>
<circle cx="60.5" cy="316" r="2.6" fill="#fff"/><circle cx="60.5" cy="316" r="2" fill="#e4738f"/><path d="M57.9 322 V320.2 Q57.9 318.5 59.6 318.5 H61.3 Q63 318.5 63 320.2 V322 Z" fill="#e4738f"/>
<circle cx="66.6" cy="312.4" r="3.3" fill="#4a7fbf"/><path d="M63.2 320.2 V318 Q63.2 315.8 65.4 315.8 H68.2 Q70.8 315.8 70.8 318 V320.2 Z" fill="#4a7fbf"/>
<!-- interessenten -->
<circle cx="82.4" cy="334.4" r="3.5" fill="#4a7fbf"/><path d="M78.2 344.6 V341 Q78.2 339 80.2 339 H84.9 Q86.9 339 86.9 341 V344.6 Z" fill="#4a7fbf"/>
<path d="M76.2 337.2 Q74.6 339.6 76.2 342.2 Q77.8 344.6 80.2 344.8" fill="none" stroke="#6f6f6f" stroke-width="1.7"/><circle cx="76.4" cy="337" r="1.5" fill="#6f6f6f"/><circle cx="80.4" cy="344.6" r="1.5" fill="#6f6f6f"/>
<!-- kunden -->
<circle cx="80.9" cy="357.4" r="3.9" fill="#4a7fbf"/><path d="M76 367.8 V364.4 Q76 362.2 78.2 362.2 H83.7 Q85.9 362.2 85.9 364.4 V367.8 Z" fill="#4a7fbf"/>
<!-- mailing -->
<circle cx="84" cy="382.3" r="5.8" fill="#8a8a8a"/>
<circle cx="84" cy="382.3" r="4.4" fill="none" stroke="#fff" stroke-width="0.6"/><path d="M80.2 378.8 Q82.2 377.2 84.2 378.6 Q83.4 380.4 85.2 381.4 Q86.8 382 86.2 384.6 Q84.2 385.2 83.2 383.2 Q82 381.2 80.2 381.4 Z" fill="#fff"/><path d="M87.6 379.6 Q88.8 381.5 88.2 384" stroke="#fff" stroke-width="0.9" fill="none"/>
<circle cx="77.8" cy="383.7" r="3.4" fill="#fff"/><circle cx="77.8" cy="383.7" r="3" fill="#4a7fbf"/>
<path d="M73.5 391.8 V389 Q73.5 387 75.5 387 H80 Q82 387 82 389 V391.8 Z" fill="#4a7fbf"/>
<!-- sonstige -->
<circle cx="84" cy="402.8" r="3" fill="#7a7a7a"/><path d="M80.8 410.7 V408 Q80.8 406 82.8 406 H85.8 Q87.8 406 87.8 408 V410.7 Z" fill="#7a7a7a"/>
<circle cx="77.6" cy="406.3" r="3.7" fill="#fff"/><circle cx="77.6" cy="406.3" r="3.2" fill="#7a7a7a"/>
<path d="M74 414 V411.8 Q74 410 76 410 H79.8 Q81.7 410 81.7 411.8 V414 Z" fill="#7a7a7a"/>
<!-- weitere -->
<circle cx="77.4" cy="425.8" r="3.3" fill="#7a7a7a"/><path d="M73 433.5 V431 Q73 429 75 429 H79 V433.5 Z" fill="#7a7a7a"/>
<circle cx="78.4" cy="431.6" r="2.8" fill="#fff"/><circle cx="78.4" cy="431.6" r="2.2" fill="#e4738f"/><path d="M76 437.5 V435.6 Q76 434 77.6 434 H79.4 Q81 434 81 435.6 V437.5 Z" fill="#e4738f"/>
<circle cx="84.2" cy="427.7" r="3.3" fill="#4a7fbf"/><path d="M81 435.8 V433.5 Q81 431.5 83 431.5 H86.5 Q88.5 431.5 88.5 433.5 V435.8 Z" fill="#4a7fbf"/>
<!-- aufgaben -->
<path d="M39.6 451.7 V460.3 H50.6 V451.7" fill="none" stroke="#777" stroke-width="1.1"/>
<rect x="39.1" y="448.2" width="12" height="3.5" fill="#4a7fbf"/>
<g fill="#777"><rect x="40.6" y="445.9" width="1.1" height="3"/><rect x="43.2" y="445.9" width="1.1" height="3"/><rect x="45.8" y="445.9" width="1.1" height="3"/><rect x="48.4" y="445.9" width="1.1" height="3"/></g>
<path d="M41.6 454 L42.8 453.3 V458.8 M41.6 458.8 H44 M45.3 454.3 Q45.8 453.2 47.2 453.2 Q48.6 453.4 48.6 454.8 Q48.4 456.2 45.3 458.8 H49" fill="none" stroke="#777" stroke-width="1"/>
<!-- schaeden -->
<path d="M45.1 470.5 L51.6 482 H38.6 Z" fill="#fff" stroke="#ecc47b" stroke-width="1.2" stroke-linejoin="round"/>
<rect x="44.4" y="474" width="2" height="4.6" fill="#777"/><rect x="44.4" y="479.4" width="2" height="1.6" fill="#777"/>
<!-- vertraege -->
<path d="M38.6 506.3 V494.8 Q38.6 494 39.6 494 H41.2" fill="none" stroke="#ecc47b" stroke-width="1.1"/>
<path d="M41.7 499 V492.6 H48.3 L50.6 495 V499" fill="#fff" stroke="#777" stroke-width="1.1"/>
<rect x="43.4" y="495" width="2.6" height="1" fill="#999"/><rect x="43.4" y="497.2" width="5" height="0.9" fill="#999"/>
<path d="M40.6 499 H53 L51 506.8 H38.2 Z" fill="#ecc47b"/>
</svg>

<div class="r" style="left:488px;top:237px;width:210px;height:114px;background:#ffffff;"></div>
<div class="r" style="left:711px;top:237px;width:210px;height:114px;background:#ffffff;"></div>
<div class="r" style="left:933px;top:237px;width:211px;height:114px;background:#ffffff;"></div>
<div class="r" style="left:488px;top:363px;width:210px;height:114px;background:#ffffff;"></div>
<div class="r" style="left:711px;top:363px;width:210px;height:114px;background:#ffffff;"></div>
<div class="r" style="left:933px;top:363px;width:211px;height:114px;background:#ffffff;"></div>
<div class="t" style="left:393.50px;width:400px;text-align:center;top:282.67px;font-size:12.5px;color:#1e1e1e;font-weight:normal;">Heutige Termine</div>
<div class="t" style="left:616.20px;width:400px;text-align:center;top:282.67px;font-size:12.5px;color:#1e1e1e;font-weight:normal;">Heutige Aufgaben</div>
<div class="t" style="left:838.50px;width:400px;text-align:center;top:282.67px;font-size:12.5px;color:#1e1e1e;font-weight:normal;">DokScan KI</div>
<div class="t" style="left:393.50px;width:400px;text-align:center;top:408.67px;font-size:12.5px;color:#1e1e1e;font-weight:normal;">Fällige Prozesse</div>
<div class="t" style="left:616.20px;width:400px;text-align:center;top:408.67px;font-size:12.5px;color:#1e1e1e;font-weight:normal;">Postkorb</div>
<div class="t" style="left:838.50px;width:400px;text-align:center;top:408.67px;font-size:12.5px;color:#1e1e1e;font-weight:normal;">DokDrop</div>
<div class="t" style="left:393.50px;width:400px;text-align:center;top:323.60px;font-size:15px;color:#1e1e1e;font-weight:normal;">0</div>
<div class="t" style="left:616.00px;width:400px;text-align:center;top:323.60px;font-size:15px;color:#e06b1c;font-weight:bold;">4</div>
<div class="t" style="left:393.70px;width:400px;text-align:center;top:449.60px;font-size:15px;color:#e06b1c;font-weight:bold;">6</div>
<div class="t" style="left:615.80px;width:400px;text-align:center;top:449.60px;font-size:15px;color:#1e1e1e;font-weight:normal;">0</div>
<svg class="r" style="left:480px;top:237px" width="670" height="170" viewBox="480 237 670 170">
<!-- heutige termine -->
<path d="M578.5 257.8 V270.4 H596.3 V259" fill="none" stroke="#7a7a7a" stroke-width="2.1"/>
<path d="M577.5 258.2 V251.8 Q577.5 251.2 578.5 251.2 H580.6 V254.8 H588 V258.2 Z" fill="#4a7fbf"/>
<rect x="580.6" y="247.6" width="2" height="6.2" fill="#7a7a7a"/><rect x="585.6" y="247.6" width="2" height="6.2" fill="#aaa"/>
<path d="M581.2 261.8 L583.4 260.4 V268.1 M581 268.1 H585.4 M587 262 Q587.6 260.2 590 260.2 Q592.4 260.4 592.4 262.6 Q592.2 264.6 587 268.1 H592.8" fill="none" stroke="#7a7a7a" stroke-width="2.1"/>
<circle cx="597.3" cy="251.5" r="7.8" fill="#fff" stroke="#7a7a7a" stroke-width="1.8"/>
<path d="M593.8 247.2 L597.2 252.6 L601.6 249.6" fill="none" stroke="#4a7fbf" stroke-width="2.4" stroke-linejoin="round"/>
<!-- heutige aufgaben -->
<rect x="804.8" y="247.9" width="19.1" height="22.9" rx="1.2" fill="#fff" stroke="#ecc47b" stroke-width="1.8"/>
<path d="M808.2 248.6 V246.4 Q808.2 243.6 811 243.6 H812.8 Q813.4 241.9 814.4 241.9 Q815.4 241.9 816 243.6 H817.8 Q820.6 243.6 820.6 246.4 V248.6 Q820.6 249.4 819.8 249.4 H809 Q808.2 249.4 808.2 248.6 Z" fill="#fff" stroke="#7a7a7a" stroke-width="1.6"/>
<rect x="809.6" y="246.2" width="9.6" height="1.7" fill="#ecc47b"/>
<circle cx="814.4" cy="243.4" r="0.7" fill="#fff"/>
<path d="M810 256 L813.5 259.3 L819.6 253 M810 264.2 L813.5 267.5 L819.6 261.2" fill="none" stroke="#4a7fbf" stroke-width="2.6"/>
<!-- gear -->
<g transform="translate(591.8 383.5)" fill="#7a7a7a">
<circle r="10.8"/>
<path transform="rotate(20)" d="M-2 -13.8 H2 L3.2 -9 H-3.2 Z" stroke="#7a7a7a" stroke-width="1" stroke-linejoin="round"/><path transform="rotate(60)" d="M-2 -13.8 H2 L3.2 -9 H-3.2 Z" stroke="#7a7a7a" stroke-width="1" stroke-linejoin="round"/><path transform="rotate(100)" d="M-2 -13.8 H2 L3.2 -9 H-3.2 Z" stroke="#7a7a7a" stroke-width="1" stroke-linejoin="round"/><path transform="rotate(140)" d="M-2 -13.8 H2 L3.2 -9 H-3.2 Z" stroke="#7a7a7a" stroke-width="1" stroke-linejoin="round"/><path transform="rotate(180)" d="M-2 -13.8 H2 L3.2 -9 H-3.2 Z" stroke="#7a7a7a" stroke-width="1" stroke-linejoin="round"/><path transform="rotate(220)" d="M-2 -13.8 H2 L3.2 -9 H-3.2 Z" stroke="#7a7a7a" stroke-width="1" stroke-linejoin="round"/><path transform="rotate(260)" d="M-2 -13.8 H2 L3.2 -9 H-3.2 Z" stroke="#7a7a7a" stroke-width="1" stroke-linejoin="round"/><path transform="rotate(300)" d="M-2 -13.8 H2 L3.2 -9 H-3.2 Z" stroke="#7a7a7a" stroke-width="1" stroke-linejoin="round"/><path transform="rotate(340)" d="M-2 -13.8 H2 L3.2 -9 H-3.2 Z" stroke="#7a7a7a" stroke-width="1" stroke-linejoin="round"/></g><circle cx="591.8" cy="383.5" r="6.3" fill="#fff"/><g>
</g>
<!-- postkorb -->
<rect x="811" y="366.2" width="20.3" height="19.8" fill="#0d67c2"/>
<circle cx="811" cy="386.4" r="13.8" fill="#9d2219"/>
<path d="M811 386.4 V372.6 A13.8 13.8 0 0 1 824.8 386.4 Z" fill="#fff"/>
<!-- dokscan -->
<path d="M1025.5 243.5 H1042.3 L1047.9 249.2 V270.4 H1025.5 Z" fill="#fff" stroke="#7a7a7a" stroke-width="2"/>
<path d="M1042.1 243.6 V249.4 H1047.8" fill="none" stroke="#7a7a7a" stroke-width="2"/>
<path d="M1038.5 252.0 Q1040.1 258.59999999999997 1046.5 260.2 Q1040.1 261.8 1038.5 268.4 Q1036.9 261.8 1030.5 260.2 Q1036.9 258.59999999999997 1038.5 252.0 Z" fill="#e0603f"/>
<path d="M1030.6 250.79999999999998 Q1031.3 253.5 1034.0 254.2 Q1031.3 254.89999999999998 1030.6 257.59999999999997 Q1029.8999999999999 254.89999999999998 1027.1999999999998 254.2 Q1029.8999999999999 253.5 1030.6 250.79999999999998 Z" fill="#edc679"/>
<path d="M1032.4 262.8 Q1033.1000000000001 265.6 1035.8000000000002 266.3 Q1033.1000000000001 267.0 1032.4 269.8 Q1031.7 267.0 1029.0 266.3 Q1031.7 265.6 1032.4 262.8 Z" fill="#6aa993"/>
<!-- dokdrop -->
<path d="M1031.6 372.5 V369.4 H1044.5 L1050 374.9 V392.4 H1044.2" fill="none" stroke="#7a7a7a" stroke-width="1.8"/>
<path d="M1044.2 369.5 V375.2 H1049.9" fill="none" stroke="#7a7a7a" stroke-width="1.8"/>
<path d="M1023.1 373.6 H1035.6 L1041.8 379.7 V396.9 H1023.1 Z" fill="#fff" stroke="#7a7a7a" stroke-width="1.8"/>
<path d="M1035.4 373.7 V380 H1041.7" fill="none" stroke="#7a7a7a" stroke-width="1.8"/>
</svg>

<div class="r" style="left:928px;top:354px;width:222px;height:124px;box-sizing:border-box;border:3px solid #fe3b3b;filter:drop-shadow(0 3px 2.5px rgba(0,0,0,0.38))"></div>
<div class="r" style="left:1149px;top:353px;width:1px;height:1px;background:#000;"></div>
<div class="r" style="left:1149px;top:478px;width:1px;height:9px;background:#000;"></div>
</body></html>
